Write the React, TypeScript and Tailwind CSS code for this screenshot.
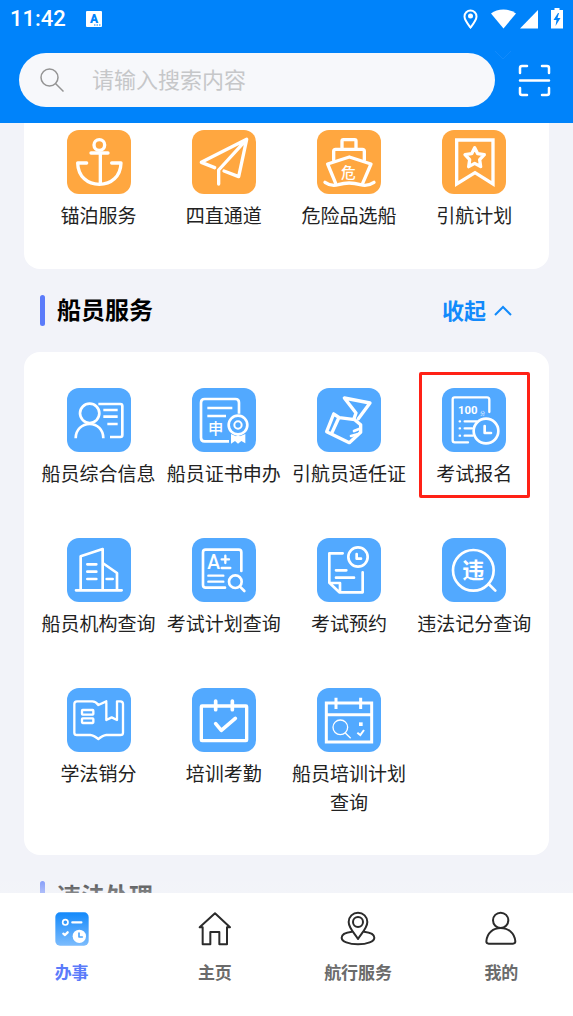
import { ReactNode } from "react";

type Service = {
  name: string;
  icon: ReactNode;
  marked?: boolean;
};

const portServices: Service[] = [
  {
    name: "锚泊服务",
    icon: (
      <>
        <circle cx="97" cy="45" r="16" />
        <path d="M72 69H123M100 69V160M59 99H32C33 140 62 163 97 163S161 140 162 99H134" />
      </>
    ),
  },
  {
    name: "四直通道",
    icon: <path d="M68 113L28 97L164 28L80 120V162M164 28L140 140L96 123" />,
  },
  {
    name: "危险品选船",
    icon: (
      <>
        <path d="M75 54V33Q75 29 79 29H113Q117 29 117 33V54M50 90V64Q50 58 56 58H136Q142 58 142 64V90" />
        <path d="M56 160L32 102L97 81L162 102L137 160M24 157Q42 170 64 164Q96 154 130 164Q152 170 171 157" />
        <text x="94" y="143" fontSize="44" textAnchor="middle" fill="white" stroke="none" fontWeight="500">危</text>
      </>
    ),
  },
  {
    name: "引航计划",
    icon: (
      <>
        <path strokeLinejoin="miter" d="M44 30H153V162L99 128L44 162Z" />
        <path d="M98 53L107 71L127 74L113 89L116 110L98 100L80 110L83 89L69 74L89 71Z" />
      </>
    ),
  },
];

const crewServices: Service[] = [
  {
    name: "船员综合信息",
    icon: (
      <g strokeLinecap="butt" strokeWidth="8">
        <circle cx="68" cy="76" r="29" />
        <path d="M26 151C26 125 45 108 68 108S109 125 109 151M94 48H160Q166 48 166 54V141Q166 147 160 147H129M109 66H152M109 86H152M121 108H152" />
      </g>
    ),
  },
  {
    name: "船员证书申办",
    icon: (
      <g strokeLinecap="butt" strokeWidth="8">
        <path d="M111 160H38Q27 160 27 149V44Q27 33 38 33H130Q141 33 141 44V77" />
        <path d="M46 60H121M46 84H102" />
        <circle cx="138" cy="111" r="28" />
        <circle cx="138" cy="111" r="11" strokeWidth="6" />
        <path fill="white" stroke="none" d="M117 138L132 145L138 141L144 145L160 138V166L148 159L138 167L129 159L117 167Z" />
        <text x="71" y="138" fontSize="46" textAnchor="middle" fill="white" stroke="none" fontWeight="500">申</text>
      </g>
    ),
  },
  {
    name: "引航员适任证",
    icon: (
      <g strokeWidth="10">
        <path d="M111 92L117 75L82 30L159 45L124 92" />
        <path d="M50 78L29 131L97 164L131 133V110L113 95L67 89L50 78M65 90L44 136" />
        <path strokeWidth="8" d="M128 122L111 129M121 139L102 144" />
      </g>
    ),
  },
  {
    name: "考试报名",
    marked: true,
    icon: (
      <g strokeWidth="7">
        <path d="M78 163H38Q32 163 32 157V34Q32 28 38 28H135Q142 28 142 35V72" />
        <path d="M53 100H54M53 121H54M53 143H54M68 100H104M68 121H90M68 143H92" />
        <circle cx="132" cy="129" r="37" strokeWidth="8" />
        <path strokeWidth="8" d="M128 114V135H147" />
        <text x="48" y="79" fontSize="34" fill="white" stroke="none" fontWeight="700" className="font-['Roboto',sans-serif]">100</text>
        <text x="122" y="82" fontSize="14" textAnchor="middle" fill="white" stroke="none">分</text>
      </g>
    ),
  },
  {
    name: "船员机构查询",
    icon: (
      <g strokeWidth="8">
        <path d="M27 157H164M41 156V55L107 33V156M107 75L150 105V156" />
        <path d="M61 79H88M61 101H88M61 123H88M119 123H137" />
      </g>
    ),
  },
  {
    name: "考试计划查询",
    icon: (
      <g strokeWidth="8">
        <path d="M99 149H41Q33 149 33 141V43Q33 35 41 35H140Q148 35 148 43V99" />
        <path d="M49 113H94M49 131H94M89 64H111M100 53V75M89 90H115" strokeWidth="7" />
        <circle cx="130" cy="131" r="19" />
        <path d="M144 146L157 159" />
        <text x="65" y="94" fontSize="58" textAnchor="middle" fill="white" stroke="none" fontWeight="500" className="font-['Roboto',sans-serif]">A</text>
      </g>
    ),
  },
  {
    name: "考试预约",
    icon: (
      <g strokeWidth="8">
        <path d="M77 46H37V134L67 163H137V103M39 135H69V162M57 97H88M57 119H111" />
        <circle cx="123" cy="57" r="29" />
        <path d="M119 48V62H132" />
      </g>
    ),
  },
  {
    name: "违法记分查询",
    icon: (
      <g strokeWidth="8">
        <circle cx="94" cy="97" r="61" />
        <path d="M140 138L160 158" />
        <text x="94" y="121" fontSize="66" textAnchor="middle" fill="white" stroke="none" fontWeight="700">违</text>
      </g>
    ),
  },
  {
    name: "学法销分",
    icon: (
      <g strokeWidth="7">
        <path d="M118 40L94 51Q86 40 76 40H30Q22 40 22 48V134Q22 141 30 141H70Q80 142 94 153Q108 142 118 141H160Q168 141 168 134V48Q168 40 160 40H150V96L134 88L118 96V44" />
        <rect x="45" y="66" width="34" height="14" rx="2" />
        <rect x="45" y="91" width="34" height="14" rx="2" />
      </g>
    ),
  },
  {
    name: "培训考勤",
    icon: (
      <>
        <rect x="28" y="54" width="136" height="104" rx="2" />
        <path strokeWidth="11" d="M71 39V65M121 39V65M71 107L88 127L130 91" />
      </>
    ),
  },
  {
    name: "船员培训计划查询",
    icon: (
      <g strokeLinecap="butt" strokeLinejoin="miter">
        <path strokeWidth="9" d="M28 45H164V162H28ZM28 80H164M57 29V63M131 29V63" />
        <circle cx="70" cy="118" r="22" strokeWidth="4" />
        <path strokeWidth="4" d="M85 135L101 151" />
        <path fill="white" stroke="none" d="M126 103H137V114H126Z" />
        <path strokeWidth="6" d="M121 134L130 141L141 126" />
      </g>
    ),
  },
];

function ServiceGrid({ items, tile }: { items: Service[]; tile: string }) {
  return (
    <div className="grid grid-cols-4 gap-y-[51px]">
      {items.map((item) => (
        <button key={item.name} className="relative flex flex-col items-center justify-start gap-1.5">
          {item.marked && <span className="absolute -top-4 -bottom-[11px] inset-x-[7px] rounded-xs border-3 border-[#ff2116]"></span>}
          <span className={`size-16 rounded-xl ${tile}`}>
            <svg viewBox="0 0 192 192" className="size-full" fill="none" stroke="white" strokeWidth="10" strokeLinecap="round" strokeLinejoin="round">
              {item.icon}
            </svg>
          </span>
          <span className="max-w-[120px] text-[19px] leading-[29px] text-[#222]">{item.name}</span>
        </button>
      ))}
    </div>
  );
}

function SectionTitle({ title, open }: { title: string; open?: boolean }) {
  return (
    <div className="flex h-[83px] items-center gap-3 pl-4 pr-[37px]">
      <span className="h-[31px] w-[5px] rounded-full bg-[#5b7bfa]"></span>
      <h2 className="pb-[3px] text-2xl font-bold text-black">{title}</h2>
      {open && (
        <button className="ml-auto flex items-center gap-2 text-[22px] font-bold text-[#128afb]">
          <span className="pb-[3px]">收起</span>
          <svg viewBox="0 0 18 12" className="h-3 w-[18px]" fill="none" stroke="currentColor" strokeWidth="2">
            <path d="M1 10L9 2L17 10" />
          </svg>
        </button>
      )}
    </div>
  );
}

function StatusBar() {
  return (
    <div className="flex h-[37px] items-center pl-[10px] pr-[10px]">
      <span className="font-['Roboto',sans-serif] text-[22px] font-medium">11:42</span>
      <svg viewBox="0 0 16 16" className="ml-5 size-4">
        <rect width="16" height="16" rx="1" fill="white" />
        <text x="8" y="12" fontSize="12" fontWeight="900" textAnchor="middle" fill="#0083fa" className="font-['Roboto',sans-serif]">A</text>
        <path d="M8 14H15" stroke="#0083fa" strokeDasharray="1.5 1" />
      </svg>
      <svg viewBox="0 0 15 20" className="ml-auto h-5 w-[15px]" fill="none" stroke="white" strokeWidth="2">
        <path d="M7.500 18.500C4 14 1.500 11 1.500 7.500A6 6 0 0 1 13.500 7.500C13.500 11 11 14 7.500 18.500Z" />
        <circle cx="7.500" cy="7" r="2.500" fill="white" stroke="none" />
      </svg>
      <svg viewBox="0 0 25 20" className="ml-[13px] h-5 w-[25px]" fill="white">
        <path d="M12.500 19.500L0 4.500Q5 0.500 12.500 0.500T25 4.500Z" />
      </svg>
      <svg viewBox="0 0 18 20" className="ml-1 h-5 w-[18px]" fill="white">
        <path d="M18 1V19.500H0Z" />
      </svg>
      <svg viewBox="0 0 12 21" className="ml-[13px] h-[21px] w-3">
        <path d="M3.500 0H8.500V2H12V20.500H0V2H3.500Z" fill="white" />
        <path d="M7 5L2.500 12H5.500L4.500 18L9.500 10H6.500L8 5Z" fill="#0083fa" />
      </svg>
    </div>
  );
}

const tabs = [
  {
    name: "办事",
    icon: (
      <>
        <defs>
          <linearGradient id="todo" x1="0" y1="0" x2="0" y2="1">
            <stop offset="0" stopColor="#1389fb" />
            <stop offset="1" stopColor="#7cbcfd" />
          </linearGradient>
        </defs>
        <rect x="1" y="1" width="100" height="100" rx="14" fill="url(#todo)" stroke="none" />
        <g stroke="white">
          <circle cx="31" cy="31" r="8" strokeWidth="5" />
          <path strokeWidth="7" d="M52 31H79M25 65L30 69L38 61" />
          <circle cx="73" cy="73" r="20" fill="white" stroke="none" />
          <path d="M72 63V75H82" stroke="#4fa6fc" strokeWidth="5" />
        </g>
      </>
    ),
  },
  {
    name: "主页",
    icon: <path d="M51 4L5 46H14V97H37V60H64V97H87V46H96Z" />,
  },
  {
    name: "航行服务",
    icon: (
      <>
        <path d="M51 81C42 66 23 48 23 30A28 28 0 0 1 79 30C79 48 60 66 51 81Z" />
        <circle cx="51" cy="30" r="15" />
        <path d="M33 59C14 61 2 68 2 77C2 88 23 97 51 97S100 88 100 77C100 68 88 61 69 59" />
      </>
    ),
  },
  {
    name: "我的",
    icon: (
      <>
        <circle cx="50" cy="25" r="23" />
        <path d="M7 88C9 62 28 48 50 48S92 62 94 88Q94 95 87 95H14Q7 95 7 88Z" />
      </>
    ),
  },
];

function TabBar() {
  return (
    <nav className="relative grid h-[123px] shrink-0 grid-cols-4 bg-white">
      <div className="absolute inset-x-0 bottom-full h-3 bg-linear-to-b from-[#f3f5f9]/30 to-[#f3f5f9]/55"></div>
      {tabs.map((tab, i) => (
        <a key={tab.name} href="#" className={`flex flex-col items-center pt-[19px] text-[17px] leading-7 font-bold ${i === 0 ? "text-[#5b7bfa]" : "text-[#6b6b6b]"}`}>
          <svg viewBox="0 0 102 102" className="size-[34px] overflow-visible" fill="none" stroke="#2b2b2b" strokeWidth="6" strokeLinecap="round" strokeLinejoin="round">
            {tab.icon}
          </svg>
          <span className="mt-3">{tab.name}</span>
        </a>
      ))}
    </nav>
  );
}

export default function App() {
  return (
    <div className="flex h-screen flex-col bg-[#f2f3f9] font-['Noto_Sans_CJK_SC',sans-serif]">
      <header className="relative shrink-0 bg-[#0083fa] pb-4 text-white">
        <StatusBar />
        <svg viewBox="0 0 18 10" className="absolute right-[61px] top-[50px] h-[10px] w-[18px]" fill="none" stroke="#128afb">
          <path d="M1 1L9 9L17 1" />
        </svg>
        <div className="mt-4 flex items-center gap-[23px] pl-[19px] pr-[22px]">
          <label className="flex h-[54px] min-w-0 flex-1 items-center gap-7 rounded-full bg-[#f7f8fb] pl-[21px] pr-6">
            <svg viewBox="0 0 24 24" className="size-6 shrink-0" fill="none" stroke="#949494" strokeWidth="1.500">
              <circle cx="9.500" cy="9.500" r="8.500" />
              <path d="M15.500 15.500L23.500 23.500" />
            </svg>
            <input type="search" aria-label="搜索" placeholder="请输入搜索内容" className="w-full min-w-0 bg-transparent pb-1 text-[22px] text-gray-800 outline-none placeholder:text-[#c6c7c9]" />
          </label>
          <button aria-label="扫一扫">
            <svg viewBox="0 0 33 33" className="size-[33px]" fill="none" stroke="white" strokeWidth="2.500" strokeLinecap="round">
              <path d="M2 9V4Q2 2 4 2H9M24 2H29Q31 2 31 4V9M31 24V29Q31 31 29 31H24M9 31H4Q2 31 2 29V24M2 16.500H31" />
            </svg>
          </button>
        </div>
      </header>

      <main className="min-h-0 flex-1 overflow-y-auto px-6 [scrollbar-width:none]">
        <section className="rounded-b-2xl bg-white px-3 pb-10 pt-[7px]">
          <ServiceGrid items={portServices} tile="bg-[#ffa740]" />
        </section>
        <SectionTitle title="船员服务" open />
        <section className="rounded-2xl bg-white px-3 pb-[39px] pt-9">
          <ServiceGrid items={crewServices} tile="bg-[#52a9ff]" />
        </section>
        <SectionTitle title="违法处理" />
      </main>

      <TabBar />
    </div>
  );
}
